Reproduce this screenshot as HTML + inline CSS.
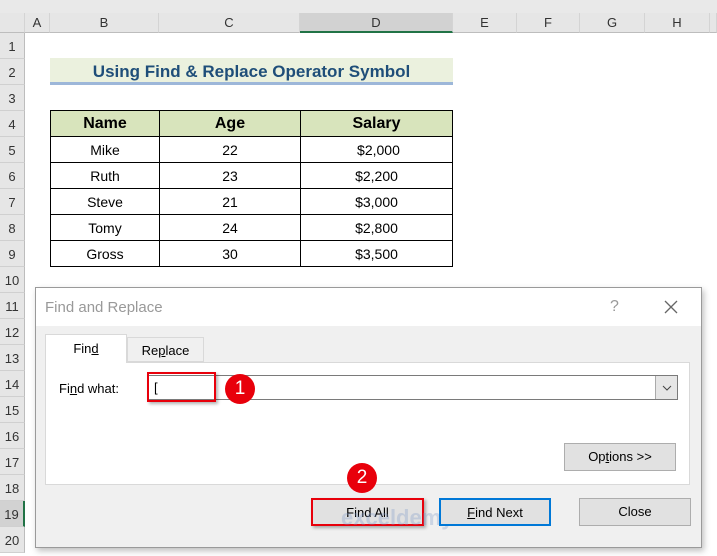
<!DOCTYPE html>
<html><head><style>
*{margin:0;padding:0;box-sizing:border-box}
body{width:717px;height:556px;overflow:hidden;background:#fff;font-family:"Liberation Sans",sans-serif;position:relative}
.a{position:absolute}
.ch{position:absolute;top:13px;height:20px;border-right:1px solid #d4d4d4;border-bottom:1px solid #bdbdbd;background:#e6e6e6;font-size:13px;color:#333;text-align:center;line-height:20px}
.rh{position:absolute;left:0;width:25px;height:26px;border-bottom:1px solid #d0d0d0;border-right:1px solid #bdbdbd;background:#e6e6e6;font-size:13px;color:#333;text-align:center;line-height:28px}
table{position:absolute;left:50px;top:110px;border-collapse:collapse}
td{border:1px solid #000;height:26px;text-align:center;font-size:14px;color:#000}
.btn{position:absolute;height:28px;background:#e1e1e1;border:1px solid #adadad;font-size:13px;text-align:center;line-height:26px;color:#000}
.circ{position:absolute;width:30px;height:30px;border-radius:50%;background:#e8000b;color:#fff;font-size:19px;text-align:center;line-height:30px}
</style></head><body>
<div class="a" style="left:0;top:0;width:717px;height:13px;background:#e9e9e9"></div>
<div class="ch" style="left:0;width:25px"></div>
<div class="ch" style="left:25px;width:25px">A</div>
<div class="ch" style="left:50px;width:109px">B</div>
<div class="ch" style="left:159px;width:141px">C</div>
<div class="ch" style="left:300px;width:153px;background:#d2d2d2;border-bottom:2px solid #217346">D</div>
<div class="ch" style="left:453px;width:64px">E</div>
<div class="ch" style="left:517px;width:63px">F</div>
<div class="ch" style="left:580px;width:65px">G</div>
<div class="ch" style="left:645px;width:65px">H</div>
<div class="ch" style="left:710px;width:7px"></div>
<div class="rh" style="top:33px">1</div><div class="rh" style="top:59px">2</div><div class="rh" style="top:85px">3</div><div class="rh" style="top:111px">4</div><div class="rh" style="top:137px">5</div><div class="rh" style="top:163px">6</div><div class="rh" style="top:189px">7</div><div class="rh" style="top:215px">8</div><div class="rh" style="top:241px">9</div><div class="rh" style="top:267px">10</div><div class="rh" style="top:293px">11</div><div class="rh" style="top:319px">12</div><div class="rh" style="top:345px">13</div><div class="rh" style="top:371px">14</div><div class="rh" style="top:397px">15</div><div class="rh" style="top:423px">16</div><div class="rh" style="top:449px">17</div><div class="rh" style="top:475px">18</div><div class="rh" style="top:501px;background:#d2d2d2;border-right:2px solid #217346">19</div><div class="rh" style="top:527px">20</div>
<div class="a" style="left:50px;top:58px;width:403px;height:27px;background:#ebf1de;border-bottom:3px solid #9db7d9;color:#1f4e79;font-weight:bold;font-size:17px;text-align:center;line-height:28px">Using Find &amp; Replace Operator Symbol</div>
<table>
<tr style="background:#d8e4bc;font-weight:bold"><td style="width:109px;font-size:16px;font-weight:bold">Name</td><td style="width:141px;font-size:16px;font-weight:bold">Age</td><td style="width:152px;font-size:16px;font-weight:bold">Salary</td></tr>
<tr><td>Mike</td><td>22</td><td>&nbsp;$2,000</td></tr>
<tr><td>Ruth</td><td>23</td><td>$2,200</td></tr>
<tr><td>Steve</td><td>21</td><td>$3,000</td></tr>
<tr><td>Tomy</td><td>24</td><td>$2,800</td></tr>
<tr><td>Gross</td><td>30</td><td>$3,500</td></tr>
</table>
<div class="a" style="left:35px;top:287px;width:667px;height:261px;background:#f0f0f0;border:1px solid #9a9a9a;box-shadow:2px 3px 6px rgba(0,0,0,.25)">
<div class="a" style="left:0;top:0;width:665px;height:38px;background:#fff"></div>
<div class="a" style="left:9px;top:11px;font-size:15px;color:#999">Find and Replace</div>
<div class="a" style="left:574px;top:10px;font-size:16px;color:#999">?</div>
<svg class="a" style="left:627px;top:11px" width="16" height="16"><path d="M2 2L14 14M14 2L2 14" stroke="#666" stroke-width="1.3"/></svg>
<div class="a" style="left:9px;top:74px;width:645px;height:123px;background:#fff;border:1px solid #d9d9d9"></div>
<div class="a" style="left:9px;top:46px;width:82px;height:29px;background:#fff;border:1px solid #d9d9d9;border-bottom:none;font-size:13px;text-align:center;line-height:28px">Fin<u>d</u></div>
<div class="a" style="left:91px;top:49px;width:77px;height:25px;background:#f0f0f0;border:1px solid #d9d9d9;font-size:13px;text-align:center;line-height:26px">Re<u>p</u>lace</div>
<div class="a" style="left:23px;top:93px;font-size:13px">Fi<u>n</u>d what:</div>
<div class="a" style="left:112px;top:87px;width:530px;height:25px;background:#fff;border:1px solid #7a7a7a"></div>
<div class="a" style="left:619px;top:88px;width:22px;height:23px;background:#e6e6e6;border-left:1px solid #aaa"><svg width="22" height="23"><path d="M7 10L11 14L15 10" stroke="#444" fill="none"/></svg></div>
<div class="a" style="left:111px;top:84px;width:69px;height:30px;border:2px solid #e8000b;box-shadow:2px 2px 3px rgba(0,0,0,.3);font-size:13px;padding:6px 0 0 5px">[</div>
<div class="circ" style="left:189px;top:86px">1</div>
<div class="btn" style="left:528px;top:155px;width:112px">Op<u>t</u>ions &gt;&gt;</div>
<div class="btn" style="left:275px;top:210px;width:113px;border:2px solid #e8000b;box-shadow:2px 2px 3px rgba(0,0,0,.3)">Find All</div>
<div class="a" style="left:305px;top:217px;font-size:22px;font-weight:bold;color:rgba(120,150,200,.3)">exceldemy</div>
<div class="circ" style="left:311px;top:175px">2</div>
<div class="btn" style="left:403px;top:210px;width:112px;border:2px solid #0078d7"><u>F</u>ind Next</div>
<div class="btn" style="left:543px;top:210px;width:112px">Close</div>
</div>
</body></html>
